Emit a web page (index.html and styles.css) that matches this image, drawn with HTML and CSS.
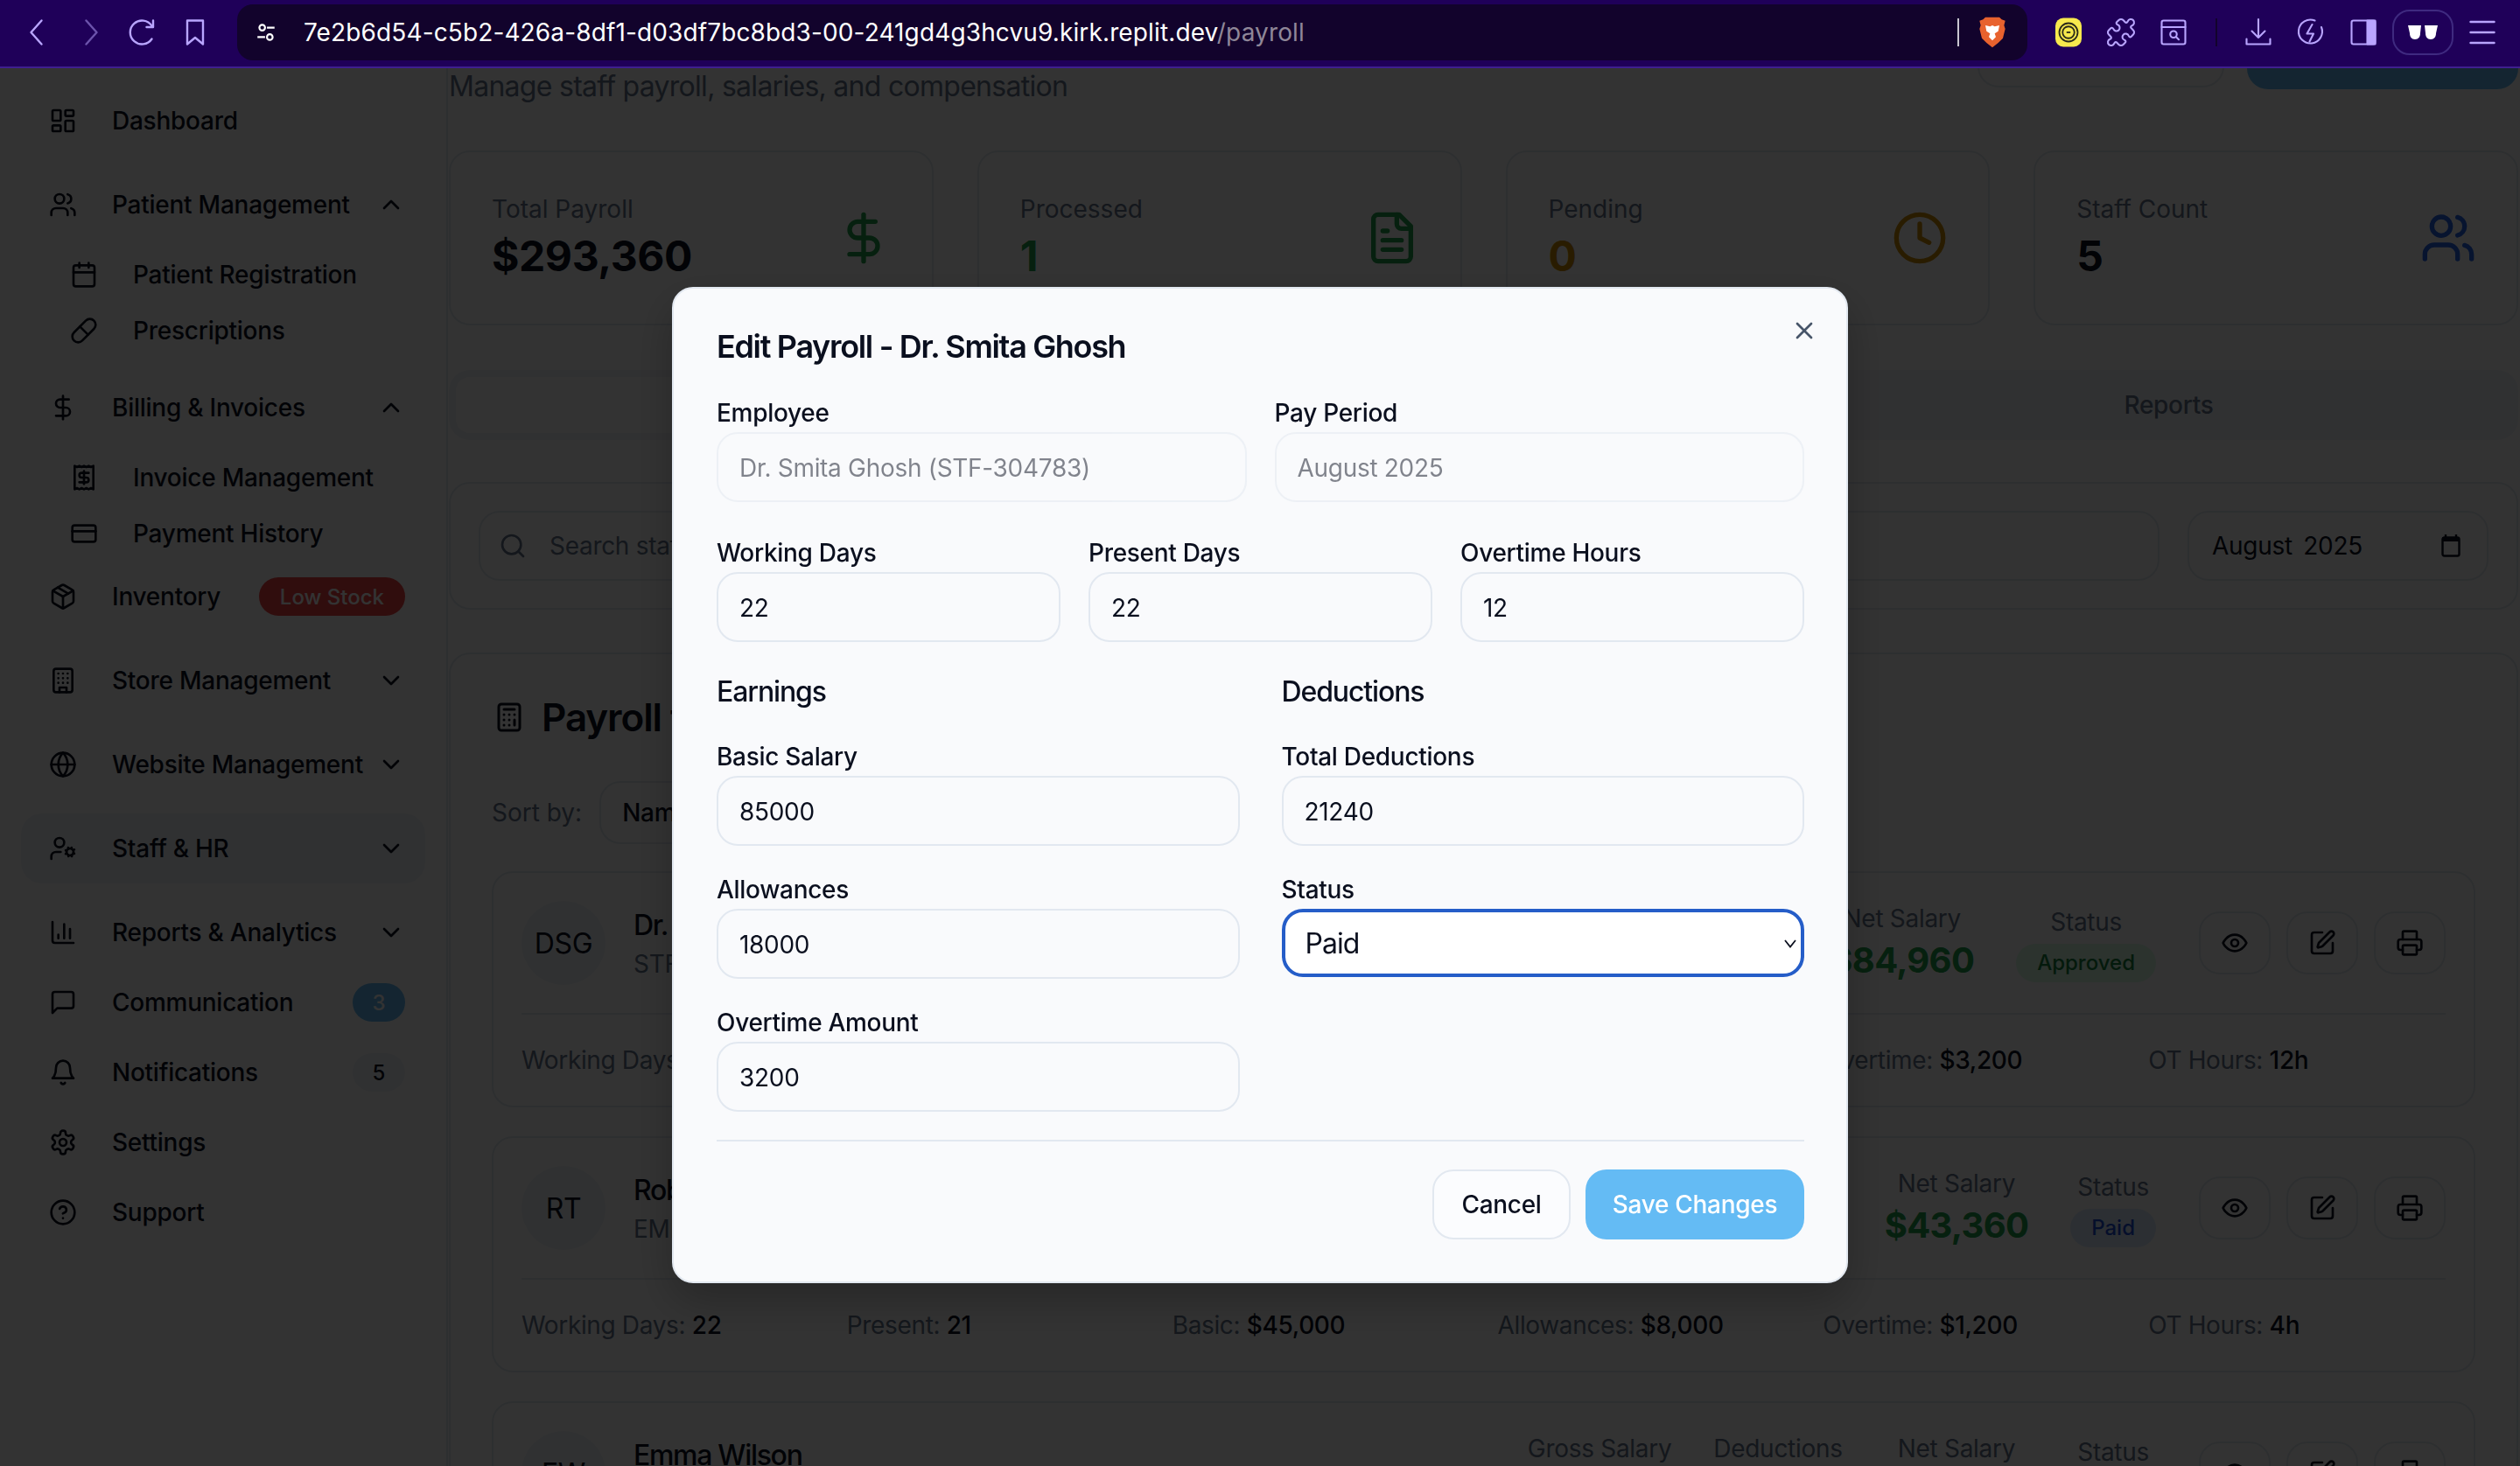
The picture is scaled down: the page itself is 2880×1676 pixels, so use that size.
FILE: index.html
```html
<!DOCTYPE html>
<html lang="en">
<head>
    <meta charset="UTF-8">
    <meta name="viewport" content="width=device-width, initial-scale=1.0">
    <title>Payroll</title>
    <link rel="stylesheet" href="styles.css">
</head>
<body>
    <svg class="sprite" xmlns="http://www.w3.org/2000/svg">
        <symbol id="i-dashboard" viewBox="0 0 24 24"><rect x="3" y="3" width="7" height="9" rx="1"/><rect x="14" y="3" width="7" height="5" rx="1"/><rect x="14" y="12" width="7" height="9" rx="1"/><rect x="3" y="16" width="7" height="5" rx="1"/></symbol>
        <symbol id="i-users" viewBox="0 0 24 24"><path d="M16 21v-2a4 4 0 0 0-4-4H6a4 4 0 0 0-4 4v2"/><circle cx="9" cy="7" r="4"/><path d="M22 21v-2a4 4 0 0 0-3-3.87"/><path d="M16 3.13a4 4 0 0 1 0 7.75"/></symbol>
        <symbol id="i-calendar" viewBox="0 0 24 24"><rect x="3" y="4" width="18" height="18" rx="2"/><path d="M16 2v4M8 2v4M3 10h18"/></symbol>
        <symbol id="i-pill" viewBox="0 0 24 24"><path d="m10.5 20.5 10-10a4.95 4.95 0 1 0-7-7l-10 10a4.95 4.95 0 1 0 7 7Z"/><path d="m8.5 8.5 7 7"/></symbol>
        <symbol id="i-dollar" viewBox="0 0 24 24"><path d="M12 2v20"/><path d="M17 5H9.5a3.5 3.5 0 0 0 0 7h5a3.5 3.5 0 0 1 0 7H6"/></symbol>
        <symbol id="i-up" viewBox="0 0 24 24"><path d="m18 15-6-6-6 6"/></symbol>
        <symbol id="i-down" viewBox="0 0 24 24"><path d="m6 9 6 6 6-6"/></symbol>
        <symbol id="i-receipt" viewBox="0 0 24 24"><path d="M4 2v20l2-1 2 1 2-1 2 1 2-1 2 1 2-1 2 1V2l-2 1-2-1-2 1-2-1-2 1-2-1-2 1Z"/><path d="M16 8h-6a2 2 0 1 0 0 4h4a2 2 0 1 1 0 4H8"/><path d="M12 17.5v-11"/></symbol>
        <symbol id="i-card" viewBox="0 0 24 24"><rect x="2" y="5" width="20" height="14" rx="2"/><path d="M2 10h20"/></symbol>
        <symbol id="i-package" viewBox="0 0 24 24"><path d="m7.5 4.27 9 5.15"/><path d="M21 8a2 2 0 0 0-1-1.73l-7-4a2 2 0 0 0-2 0l-7 4A2 2 0 0 0 3 8v8a2 2 0 0 0 1 1.73l7 4a2 2 0 0 0 2 0l7-4A2 2 0 0 0 21 16Z"/><path d="m3.3 7 8.7 5 8.7-5"/><path d="M12 22V12"/></symbol>
        <symbol id="i-building" viewBox="0 0 24 24"><rect x="4" y="2" width="16" height="20" rx="2"/><path d="M9 22v-4h6v4"/><path d="M8 6h.01M16 6h.01M12 6h.01M12 10h.01M12 14h.01M16 10h.01M16 14h.01M8 10h.01M8 14h.01"/></symbol>
        <symbol id="i-globe" viewBox="0 0 24 24"><circle cx="12" cy="12" r="10"/><path d="M12 2a14.5 14.5 0 0 0 0 20 14.5 14.5 0 0 0 0-20"/><path d="M2 12h20"/></symbol>
        <symbol id="i-usercog" viewBox="0 0 24 24"><circle cx="18" cy="15" r="3"/><circle cx="9" cy="7" r="4"/><path d="M10 15H6a4 4 0 0 0-4 4v2"/><path d="m21.7 16.4-.9-.3m-5.6-2.2-.9-.3m2.3 5.1.3-.9m2.2-5.6.3-.9m.2 7.4-.4-1m-2.4-5.4-.4-1m-2.1 5.3 1-.4m5.4-2.8 1-.4"/></symbol>
        <symbol id="i-chart" viewBox="0 0 24 24"><path d="M3 3v16a2 2 0 0 0 2 2h16"/><path d="M18 17V9M13 17V5M8 17v-3"/></symbol>
        <symbol id="i-message" viewBox="0 0 24 24"><path d="M21 15a2 2 0 0 1-2 2H7l-4 4V5a2 2 0 0 1 2-2h14a2 2 0 0 1 2 2z"/></symbol>
        <symbol id="i-bell" viewBox="0 0 24 24"><path d="M6 8a6 6 0 0 1 12 0c0 7 3 9 3 9H3s3-2 3-9"/><path d="M10.3 21a1.94 1.94 0 0 0 3.4 0"/></symbol>
        <symbol id="i-settings" viewBox="0 0 24 24"><path d="M12.22 2h-.44a2 2 0 0 0-2 2v.18a2 2 0 0 1-1 1.73l-.43.25a2 2 0 0 1-2 0l-.15-.08a2 2 0 0 0-2.73.73l-.22.38a2 2 0 0 0 .73 2.73l.15.1a2 2 0 0 1 1 1.72v.51a2 2 0 0 1-1 1.74l-.15.09a2 2 0 0 0-.73 2.73l.22.38a2 2 0 0 0 2.73.73l.15-.08a2 2 0 0 1 2 0l.43.25a2 2 0 0 1 1 1.73V20a2 2 0 0 0 2 2h.44a2 2 0 0 0 2-2v-.18a2 2 0 0 1 1-1.73l.43-.25a2 2 0 0 1 2 0l.15.08a2 2 0 0 0 2.73-.73l.22-.39a2 2 0 0 0-.73-2.73l-.15-.08a2 2 0 0 1-1-1.74v-.5a2 2 0 0 1 1-1.74l.15-.09a2 2 0 0 0 .73-2.73l-.22-.38a2 2 0 0 0-2.73-.73l-.15.08a2 2 0 0 1-2 0l-.43-.25a2 2 0 0 1-1-1.73V4a2 2 0 0 0-2-2z"/><circle cx="12" cy="12" r="3"/></symbol>
        <symbol id="i-help" viewBox="0 0 24 24"><circle cx="12" cy="12" r="10"/><path d="M9.09 9a3 3 0 0 1 5.83 1c0 2-3 3-3 3"/><path d="M12 17h.01"/></symbol>
        <symbol id="i-file" viewBox="0 0 24 24"><path d="M15 2H6a2 2 0 0 0-2 2v16a2 2 0 0 0 2 2h12a2 2 0 0 0 2-2V7Z"/><path d="M14 2v4a2 2 0 0 0 2 2h4"/><path d="M10 9H8M16 13H8M16 17H8"/></symbol>
        <symbol id="i-clock" viewBox="0 0 24 24"><circle cx="12" cy="12" r="10"/><path d="M12 6v6l4 2"/></symbol>
        <symbol id="i-search" viewBox="0 0 24 24"><circle cx="11" cy="11" r="8"/><path d="m21 21-4.3-4.3"/></symbol>
        <symbol id="i-calculator" viewBox="0 0 24 24"><rect x="4" y="2" width="16" height="20" rx="2"/><path d="M8 6h8M16 14v4M16 10h.01M12 10h.01M8 10h.01M12 14h.01M8 14h.01M12 18h.01M8 18h.01"/></symbol>
        <symbol id="i-eye" viewBox="0 0 24 24"><path d="M2 12s3-7 10-7 10 7 10 7-3 7-10 7-10-7-10-7Z"/><circle cx="12" cy="12" r="3"/></symbol>
        <symbol id="i-edit" viewBox="0 0 24 24"><path d="M12 3H5a2 2 0 0 0-2 2v14a2 2 0 0 0 2 2h14a2 2 0 0 0 2-2v-7"/><path d="M18.375 2.625a1 1 0 0 1 3 3l-9.013 9.014a2 2 0 0 1-.853.505l-2.873.84a.5.5 0 0 1-.62-.62l.84-2.873a2 2 0 0 1 .506-.852z"/></symbol>
        <symbol id="i-printer" viewBox="0 0 24 24"><path d="M6 18H4a2 2 0 0 1-2-2v-5a2 2 0 0 1 2-2h16a2 2 0 0 1 2 2v5a2 2 0 0 1-2 2h-2"/><path d="M6 9V3a1 1 0 0 1 1-1h10a1 1 0 0 1 1 1v6"/><rect x="6" y="14" width="12" height="8" rx="1"/></symbol>
        <symbol id="i-x" viewBox="0 0 24 24"><path d="M18 6 6 18"/><path d="m6 6 12 12"/></symbol>
        <symbol id="i-puzzle" viewBox="0 0 24 24"><path d="M19.439 7.85c-.049.322.059.648.289.878l1.568 1.568c.47.47.706 1.087.706 1.704s-.235 1.233-.706 1.704l-1.611 1.611a.98.98 0 0 1-.837.276c-.47-.07-.802-.48-.968-.925a2.501 2.501 0 1 0-3.214 3.214c.446.166.855.497.925.968a.979.979 0 0 1-.276.837l-1.61 1.61a2.404 2.404 0 0 1-1.705.707 2.402 2.402 0 0 1-1.704-.706l-1.568-1.568a1.026 1.026 0 0 0-.877-.29c-.493.074-.84.504-1.02.968a2.5 2.5 0 1 1-3.237-3.237c.464-.18.894-.527.967-1.02a1.026 1.026 0 0 0-.289-.877l-1.568-1.568A2.402 2.402 0 0 1 1.998 12c0-.617.236-1.234.706-1.704L4.23 8.77c.24-.24.581-.353.917-.303.515.077.877.528 1.073 1.01a2.5 2.5 0 1 0 3.259-3.259c-.482-.196-.933-.558-1.01-1.073-.05-.336.062-.676.303-.917l1.525-1.525A2.402 2.402 0 0 1 12 1.998c.617 0 1.234.236 1.704.706l1.568 1.568c.23.23.556.338.877.29.493-.074.84-.504 1.02-.968a2.5 2.5 0 1 1 3.237 3.237c-.464.18-.894.527-.967 1.02Z"/></symbol>
    </svg>

    <header class="toolbar">
        <div class="tool"><svg class="tool-icon" viewBox="0 0 24 24"><path d="M15 3 7 12l8 9"/></svg></div>
        <div class="tool tool-dim"><svg class="tool-icon" viewBox="0 0 24 24"><path d="m9 3 8 9-8 9"/></svg></div>
        <div class="tool"><svg class="tool-icon" viewBox="0 0 24 24"><path d="M19 17a9 9 0 1 1 0-10"/><path d="M20 3v5h-5"/></svg></div>
        <div class="tool"><svg class="tool-icon" viewBox="0 0 24 24"><path d="M6 3h12v18l-6-5-6 5z"/></svg></div>
        <div class="urlbar">
            <svg class="url-tune" viewBox="0 0 24 24"><circle cx="8" cy="7" r="3"/><path d="M13 7h8M3 17h8"/><circle cx="16" cy="17" r="3"/></svg>
            <span class="url-text">7e2b6d54-c5b2-426a-8df1-d03df7bc8bd3-00-241gd4g3hcvu9.kirk.replit.dev<span class="url-path">/payroll</span></span>
            <span class="url-sep"></span>
            <svg class="brave" viewBox="0 0 24 28"><path class="brave-body" d="M6 1h12l2 2 3 1-1 4 1 3-2 8-4 4-5 4-5-4-4-4-2-8 1-3-1-4 3-1z"/><path class="brave-face" d="M6 8l4 1 2-1 2 1 4-1-1 5-3 2 1 3-3 3-3-3 1-3-3-2z"/></svg>
        </div>
        <div class="tool tool-first"><svg class="ext-tile" viewBox="0 0 24 24"><rect x="2" y="1" width="20" height="22" rx="6"/><circle cx="12" cy="12" r="7"/><circle cx="12" cy="12" r="4.5"/><path d="M10.5 12h3"/></svg></div>
        <div class="tool"><svg class="tool-icon tool-thin"><use href="#i-puzzle"/></svg></div>
        <div class="tool"><svg class="tool-icon tool-thin" viewBox="0 0 24 24"><rect x="3" y="3" width="18" height="18" rx="1.5"/><path d="M3 8h18"/><circle cx="12" cy="13.5" r="2.5"/><path d="m14 15.5 2 2"/></svg></div>
        <span class="tool-sep"></span>
        <div class="tool"><svg class="tool-icon tool-thin" viewBox="0 0 24 24"><path d="M12 2v14M7 11l5 5 5-5M3 17v4h18v-4"/></svg></div>
        <div class="tool"><svg class="tool-icon tool-thin" viewBox="0 0 24 24"><path d="M20 8a9 9 0 1 1-5-5"/><path d="M13 6 9 13h5l-3 6"/></svg></div>
        <div class="tool"><svg class="tool-icon tool-thin" viewBox="0 0 24 24"><rect x="3" y="3" width="18" height="18" rx="1.5"/><rect class="tool-fill" x="15" y="3" width="6" height="18"/></svg></div>
        <div class="shield"><svg class="glasses" viewBox="0 0 36 18"><path d="M1 1h15l-1 9c0 4-2 7-6 7s-6-3-6-7zM20 1h15l-2 9c0 4-2 7-6 7s-6-3-6-7z"/></svg></div>
        <div class="tool"><svg class="tool-icon" viewBox="0 0 24 24"><path d="M3 4h18M3 12h18M3 20h18"/></svg></div>
    </header>

    <div class="app">
        <aside class="sidebar">
            <nav class="nav">
                <a class="nav-item"><svg class="icon"><use href="#i-dashboard"/></svg><span>Dashboard</span></a>

                <div class="nav-group">
                    <a class="nav-item"><svg class="icon"><use href="#i-users"/></svg><span>Patient Management</span><svg class="icon chevron"><use href="#i-up"/></svg></a>
                    <div class="sub-list">
                        <a class="nav-item sub-item"><svg class="icon"><use href="#i-calendar"/></svg><span>Patient Registration</span></a>
                        <a class="nav-item sub-item"><svg class="icon"><use href="#i-pill"/></svg><span>Prescriptions</span></a>
                    </div>
                </div>

                <div class="nav-group">
                    <a class="nav-item"><svg class="icon"><use href="#i-dollar"/></svg><span>Billing &amp; Invoices</span><svg class="icon chevron"><use href="#i-up"/></svg></a>
                    <div class="sub-list">
                        <a class="nav-item sub-item"><svg class="icon"><use href="#i-receipt"/></svg><span>Invoice Management</span></a>
                        <a class="nav-item sub-item"><svg class="icon"><use href="#i-card"/></svg><span>Payment History</span></a>
                    </div>
                </div>

                <a class="nav-item"><svg class="icon"><use href="#i-package"/></svg><span>Inventory</span><span class="badge badge-red">Low Stock</span></a>

                <div class="nav-group"><a class="nav-item"><svg class="icon"><use href="#i-building"/></svg><span>Store Management</span><svg class="icon chevron"><use href="#i-down"/></svg></a></div>
                <div class="nav-group"><a class="nav-item"><svg class="icon"><use href="#i-globe"/></svg><span>Website Management</span><svg class="icon chevron"><use href="#i-down"/></svg></a></div>
                <div class="nav-group nav-group-active"><a class="nav-item"><svg class="icon"><use href="#i-usercog"/></svg><span>Staff &amp; HR</span><svg class="icon chevron"><use href="#i-down"/></svg></a></div>
                <div class="nav-group"><a class="nav-item"><svg class="icon"><use href="#i-chart"/></svg><span>Reports &amp; Analytics</span><svg class="icon chevron"><use href="#i-down"/></svg></a></div>

                <a class="nav-item"><svg class="icon"><use href="#i-message"/></svg><span>Communication</span><span class="badge badge-round badge-blue">3</span></a>
                <a class="nav-item"><svg class="icon"><use href="#i-bell"/></svg><span>Notifications</span><span class="badge badge-round badge-grey">5</span></a>
                <a class="nav-item"><svg class="icon"><use href="#i-settings"/></svg><span>Settings</span></a>
                <a class="nav-item"><svg class="icon"><use href="#i-help"/></svg><span>Support</span></a>
            </nav>
        </aside>

        <main class="main">
            <div class="page-header">
                <p class="page-sub">Manage staff payroll, salaries, and compensation</p>
                <div class="page-actions">
                    <button class="head-btn head-outline" aria-label="Export"></button>
                    <button class="head-btn head-primary" aria-label="Process payroll"></button>
                </div>
            </div>

            <section class="stats">
                <div class="stat-card">
                    <div><p class="stat-label">Total Payroll</p><p class="stat-value">$293,360</p></div>
                    <svg class="icon stat-icon text-green"><use href="#i-dollar"/></svg>
                </div>
                <div class="stat-card">
                    <div><p class="stat-label">Processed</p><p class="stat-value text-green">1</p></div>
                    <svg class="icon stat-icon text-green"><use href="#i-file"/></svg>
                </div>
                <div class="stat-card">
                    <div><p class="stat-label">Pending</p><p class="stat-value text-amber">0</p></div>
                    <svg class="icon stat-icon text-amber"><use href="#i-clock"/></svg>
                </div>
                <div class="stat-card">
                    <div><p class="stat-label">Staff Count</p><p class="stat-value">5</p></div>
                    <svg class="icon stat-icon text-blue"><use href="#i-users"/></svg>
                </div>
            </section>

            <div class="tabs">
                <div class="tab tab-active">Payroll</div>
                <div class="tab">Salary</div>
                <div class="tab">Reports</div>
            </div>

            <section class="filters">
                <div class="search">
                    <svg class="icon search-icon"><use href="#i-search"/></svg>
                    <span>Search staff...</span>
                </div>
                <div class="month">
                    <span>August 2025</span>
                    <svg class="month-icon" viewBox="0 0 22 26"><path d="M5 0v3M17 0v3"/><rect x="1.5" y="3.5" width="19" height="21" rx="2"/><path class="month-band" d="M1 3h20v5H1z"/></svg>
                </div>
            </section>

            <section class="payroll">
                <h2 class="payroll-title"><svg class="icon title-icon"><use href="#i-calculator"/></svg>Payroll for August 2025</h2>
                <div class="sort-row">
                    <span class="sort-label">Sort by:</span>
                    <div class="sort-select">Name</div>
                </div>

                <div class="staff-list">
                    <article class="staff-card">
                        <div class="staff-top">
                            <div class="avatar">DSG</div>
                            <div class="staff-name"><h3>Dr. Smita Ghosh</h3><p>STF-304783</p></div>
                            <div class="staff-figures">
                                <div class="figure"><p>Gross Salary</p><b>$106,200</b></div>
                                <div class="figure"><p>Deductions</p><b>$21,240</b></div>
                                <div class="figure figure-net"><p>Net Salary</p><b class="text-green">$84,960</b></div>
                                <div class="status"><p>Status</p><span class="pill pill-green">Approved</span></div>
                                <div class="actions">
                                    <button class="act"><svg class="icon"><use href="#i-eye"/></svg></button>
                                    <button class="act"><svg class="icon"><use href="#i-edit"/></svg></button>
                                    <button class="act"><svg class="icon"><use href="#i-printer"/></svg></button>
                                </div>
                            </div>
                        </div>
                        <div class="staff-bottom">
                            <p>Working Days: <b>22</b></p><p>Present: <b>22</b></p><p>Basic: <b>$85,000</b></p><p>Allowances: <b>$18,000</b></p><p>Overtime: <b>$3,200</b></p><p>OT Hours: <b>12h</b></p>
                        </div>
                    </article>

                    <article class="staff-card">
                        <div class="staff-top">
                            <div class="avatar">RT</div>
                            <div class="staff-name"><h3>Robert Taylor</h3><p>EMP-304784</p></div>
                            <div class="staff-figures">
                                <div class="figure"><p>Gross Salary</p><b>$54,200</b></div>
                                <div class="figure"><p>Deductions</p><b>$10,840</b></div>
                                <div class="figure figure-net"><p>Net Salary</p><b class="text-green">$43,360</b></div>
                                <div class="status"><p>Status</p><span class="pill pill-blue">Paid</span></div>
                                <div class="actions">
                                    <button class="act"><svg class="icon"><use href="#i-eye"/></svg></button>
                                    <button class="act"><svg class="icon"><use href="#i-edit"/></svg></button>
                                    <button class="act"><svg class="icon"><use href="#i-printer"/></svg></button>
                                </div>
                            </div>
                        </div>
                        <div class="staff-bottom">
                            <p>Working Days: <b>22</b></p><p>Present: <b>21</b></p><p>Basic: <b>$45,000</b></p><p>Allowances: <b>$8,000</b></p><p>Overtime: <b>$1,200</b></p><p>OT Hours: <b>4h</b></p>
                        </div>
                    </article>

                    <article class="staff-card">
                        <div class="staff-top">
                            <div class="avatar">EW</div>
                            <div class="staff-name"><h3>Emma Wilson</h3><p>EMP-304785</p></div>
                            <div class="staff-figures">
                                <div class="figure"><p>Gross Salary</p><b>$54,200</b></div>
                                <div class="figure"><p>Deductions</p><b>$10,840</b></div>
                                <div class="figure figure-net"><p>Net Salary</p><b class="text-green">$43,360</b></div>
                                <div class="status"><p>Status</p><span class="pill pill-blue">Paid</span></div>
                                <div class="actions">
                                    <button class="act"><svg class="icon"><use href="#i-eye"/></svg></button>
                                    <button class="act"><svg class="icon"><use href="#i-edit"/></svg></button>
                                    <button class="act"><svg class="icon"><use href="#i-printer"/></svg></button>
                                </div>
                            </div>
                        </div>
                    </article>
                </div>
            </section>
        </main>
    </div>

    <div class="overlay">
        <div class="modal">
            <button class="modal-close" aria-label="Close"><svg class="icon"><use href="#i-x"/></svg></button>
            <h2 class="modal-title">Edit Payroll - Dr. Smita Ghosh</h2>

            <form class="form">
                <div class="row row-2">
                    <div class="field"><label>Employee</label><input class="input" value="Dr. Smita Ghosh (STF-304783)" disabled></div>
                    <div class="field"><label>Pay Period</label><input class="input" value="August 2025" disabled></div>
                </div>
                <div class="row row-3">
                    <div class="field"><label>Working Days</label><input class="input" value="22"></div>
                    <div class="field"><label>Present Days</label><input class="input" value="22"></div>
                    <div class="field"><label>Overtime Hours</label><input class="input" value="12"></div>
                </div>
                <div class="money">
                    <div class="money-col">
                        <h3>Earnings</h3>
                        <div class="field"><label>Basic Salary</label><input class="input" value="85000"></div>
                        <div class="field"><label>Allowances</label><input class="input" value="18000"></div>
                        <div class="field"><label>Overtime Amount</label><input class="input" value="3200"></div>
                    </div>
                    <div class="money-col">
                        <h3>Deductions</h3>
                        <div class="field"><label>Total Deductions</label><input class="input" value="21240"></div>
                        <div class="field">
                            <label>Status</label>
                            <div class="select-wrap">
                                <select class="select"><option>Paid</option></select>
                                <svg class="select-arrow" viewBox="0 0 12 12"><path d="m2 4 4 5 4-5"/></svg>
                            </div>
                        </div>
                    </div>
                </div>
                <div class="form-foot">
                    <button type="button" class="btn btn-outline">Cancel</button>
                    <button type="button" class="btn btn-primary">Save Changes</button>
                </div>
            </form>
        </div>
    </div>
</body>
</html>
```

FILE: styles.css
```css
*{
    margin: 0;
    padding: 0;
    box-sizing: border-box;
}

body{
    height: 100vh;
    overflow: hidden;
    display: flex;
    flex-direction: column;
    background: #fff;
    color: #0a0f1e;
    font-family: "Inter", "Liberation Sans", sans-serif;
    font-size: 28px;
    letter-spacing: -.3px;
}

.sprite{
    display: none;
}

.icon{
    width: 32px;
    height: 32px;
    flex: none;
    fill: none;
    stroke: currentColor;
    stroke-width: 2;
    stroke-linecap: round;
    stroke-linejoin: round;
}

/* browser bar */
.toolbar{
    height: 78px;
    flex: none;
    display: flex;
    align-items: center;
    padding-left: 13px;
    padding-bottom: 8px;
    padding-top: 6px;
    background: #1f0059;
    border-bottom: 2px solid #3f1f8f;
    position: relative;
    z-index: 2;
}
.tool{
    width: 60px;
    height: 60px;
    flex: none;
    display: flex;
    align-items: center;
    justify-content: center;
}
.tool-dim{
    opacity: .5;
}
.tool-first{
    margin-left: 17px;
}
.tool-icon{
    width: 36px;
    height: 36px;
    fill: none;
    stroke: #b9a5ff;
    stroke-width: 1.6;
    stroke-linecap: round;
    stroke-linejoin: round;
}
.tool-thin{
    stroke-width: 1.4;
}
.tool-fill{
    fill: #b9a5ff;
}
.tool-sep{
    width: 2px;
    height: 32px;
    margin: 0 17px 0 18px;
    background: #12032c;
}
.urlbar{
    width: 2046px;
    height: 64px;
    margin-left: 18px;
    flex: none;
    display: flex;
    align-items: center;
    padding-left: 20px;
    background: #12032c;
    border-radius: 18px;
}
.url-tune{
    width: 26px;
    height: 26px;
    fill: none;
    stroke: #fff;
    stroke-width: 2;
    flex: none;
    margin-right: 30px;
}
.url-text{
    flex: 1;
    color: #fff;
    font-size: 28px;
    letter-spacing: .13px;
    white-space: nowrap;
}
.url-path{
    color: #8f8798;
}
.url-sep{
    width: 2px;
    height: 32px;
    background: #c9c5d0;
}
.brave{
    width: 32px;
    height: 38px;
    margin: 0 24px 0 22px;
}
.brave-body{
    fill: #e8622e;
}
.brave-face{
    fill: #fff;
}
.ext-tile{
    width: 36px;
    height: 36px;
}
.ext-tile rect{
    fill: #f7e94d;
}
.ext-tile circle,
.ext-tile path{
    fill: none;
    stroke: #2a2a1a;
    stroke-width: 1.2;
}
.shield{
    width: 70px;
    height: 52px;
    flex: none;
    margin: 0 3px;
    display: flex;
    align-items: center;
    justify-content: center;
    border: 2px solid #3f2a80;
    border-radius: 20px;
}
.glasses{
    width: 36px;
    height: 18px;
    fill: #fff;
}

/* app shell */
.app{
    flex: 1;
    min-height: 0;
    display: flex;
}
.sidebar{
    width: 512px;
    flex: none;
    padding-top: 28px;
    border-right: 2px solid #e2e8f0;
}
.nav{
    display: flex;
    flex-direction: column;
    gap: 16px;
}
.nav-item{
    height: 64px;
    margin: 0 24px;
    padding: 0 23px 0 32px;
    display: flex;
    align-items: center;
    font-weight: 500;
    letter-spacing: -.25px;
    color: #0a0f1e;
    white-space: nowrap;
}
.nav-item > .icon:first-child{
    margin-right: 40px;
}
.nav-group{
    padding-top: 16px;
}
.nav-group-active .nav-item{
    height: 80px;
    margin-top: -8px;
    margin-bottom: -8px;
    background: #f1f5f9;
    border-radius: 24px;
}
.sub-list{
    margin: 16px 0 -8px;
}
.sub-item{
    padding-left: 56px;
}
.chevron{
    margin-left: auto;
}
.badge{
    margin-left: auto;
    height: 44px;
    display: flex;
    align-items: center;
    justify-content: center;
    padding: 0 24px;
    border-radius: 22px;
    font-size: 24px;
    font-weight: 500;
    letter-spacing: 0;
}
.badge-round{
    width: 60px;
    padding: 0;
}
.badge-red{
    background: #ef4444;
    color: #fff;
}
.badge-blue{
    background: #64bbf4;
    color: #fff;
}
.badge-grey{
    background: #f1f5f9;
    color: #0a0f1e;
}

/* main column, scrolled so the heading sits under the browser bar */
.main{
    flex: 1;
    min-width: 0;
    height: 100%;
    overflow: hidden;
    padding: 0 2px 0 1px;
}
.page-header{
    margin-top: -56px;
    display: flex;
    justify-content: space-between;
    align-items: flex-start;
}
.page-sub{
    padding-top: 53px;
    font-size: 32px;
    line-height: 48px;
    letter-spacing: -.72px;
    color: #64748b;
}
.page-actions{
    display: flex;
    align-items: flex-start;
    gap: 26px;
}
.head-btn{
    border-radius: 24px;
    background: none;
}
.head-outline{
    width: 282px;
    height: 78px;
    border: 2px solid #e2e8f0;
}
.head-primary{
    width: 310px;
    height: 80px;
    border: none;
    background: #64bbf4;
}

.stats{
    margin-top: 49px;
    display: grid;
    grid-template-columns: repeat(4, 1fr);
    gap: 50px;
}
.stat-card{
    height: 200px;
    padding: 46px 46px 46px 47px;
    display: flex;
    justify-content: space-between;
    align-items: center;
    border: 2px solid #e2e8f0;
    border-radius: 24px;
}
.stat-label{
    line-height: 40px;
    letter-spacing: 0;
    color: #64748b;
}
.stat-value{
    margin-top: 2px;
    font-size: 48px;
    line-height: 64px;
    font-weight: 700;
    letter-spacing: -.4px;
}
.stat-icon{
    width: 64px;
    height: 64px;
}
.text-green{
    color: #22a04a;
}
.text-amber{
    color: #ca8a04;
}
.text-blue{
    color: #2563eb;
}

.tabs{
    margin-top: 51px;
    height: 80px;
    padding: 8px;
    display: grid;
    grid-template-columns: repeat(3, 1fr);
    background: #f1f5f9;
    border-radius: 24px;
}
.tab{
    display: flex;
    align-items: center;
    justify-content: center;
    font-weight: 500;
    color: #64748b;
    border-radius: 16px;
}
.tab-active{
    background: #fff;
    color: #0a0f1e;
}

.filters{
    margin-top: 48px;
    height: 146px;
    padding: 0 32px;
    display: flex;
    align-items: center;
    gap: 32px;
    border: 2px solid #e2e8f0;
    border-radius: 24px;
}
.search{
    flex: 1;
    height: 80px;
    padding-left: 21px;
    display: flex;
    align-items: center;
    gap: 26px;
    color: #64748b;
    border: 2px solid #e2e8f0;
    border-radius: 24px;
}
.search-icon{
    color: #64748b;
}
.month{
    width: 344px;
    height: 80px;
    padding: 0 30px 0 26px;
    display: flex;
    align-items: center;
    justify-content: space-between;
    word-spacing: 5px;
    border: 2px solid #e2e8f0;
    border-radius: 24px;
}
.month-icon{
    width: 22px;
    height: 26px;
    fill: none;
    stroke: #0a0f1e;
    stroke-width: 2.4;
}
.month-band{
    fill: #0a0f1e;
    stroke: none;
}

.payroll{
    margin-top: 49px;
    padding: 46px 47px;
    border: 2px solid #e2e8f0;
    border-radius: 24px;
}
.payroll-title{
    display: flex;
    align-items: center;
    gap: 19px;
    font-size: 44px;
    line-height: 52px;
    font-weight: 600;
    letter-spacing: -.025em;
}
.title-icon{
    width: 36px;
    height: 36px;
    margin-left: 2px;
}
.sort-row{
    margin-top: 47px;
    display: flex;
    align-items: center;
    gap: 20px;
}
.sort-label{
    letter-spacing: 0;
    color: #64748b;
}
.sort-select{
    width: 300px;
    height: 72px;
    padding-left: 24px;
    display: flex;
    align-items: center;
    font-weight: 500;
    border: 2px solid #e2e8f0;
    border-radius: 24px;
}

.staff-list{
    margin-top: 31px;
    display: flex;
    flex-direction: column;
    gap: 33px;
}
.staff-card{
    padding: 32px;
    border: 2px solid #e2e8f0;
    border-radius: 24px;
}
.staff-top{
    display: flex;
    align-items: center;
    gap: 32px;
}
.avatar{
    width: 96px;
    height: 96px;
    flex: none;
    display: flex;
    align-items: center;
    justify-content: center;
    font-size: 32px;
    background: #f1f5f9;
    border-radius: 50%;
}
.staff-name h3{
    font-size: 32px;
    line-height: 48px;
    font-weight: 500;
    letter-spacing: -1.3px;
}
.staff-name p{
    line-height: 40px;
    color: #64748b;
}
.staff-figures{
    margin-left: auto;
    display: flex;
    align-items: center;
    gap: 48px;
}
.figure{
    text-align: center;
}
.figure p{
    line-height: 40px;
    color: #64748b;
}
.figure b{
    display: block;
    font-size: 32px;
    line-height: 56px;
    font-weight: 700;
}
.figure-net b{
    font-size: 40px;
    letter-spacing: -.7px;
}
.status{
    display: flex;
    flex-direction: column;
    align-items: center;
    gap: 5px;
    margin-right: 1px;
}
.status p{
    line-height: 40px;
    color: #64748b;
}
.pill{
    height: 44px;
    padding: 0 24px;
    display: flex;
    align-items: center;
    font-size: 24px;
    font-weight: 500;
    letter-spacing: 0;
    border-radius: 22px;
}
.pill-green{
    background: #dcfce7;
    color: #15803d;
}
.pill-blue{
    background: #dbeafe;
    color: #1d4ed8;
}
.actions{
    display: flex;
    gap: 18px;
}
.act{
    width: 82px;
    height: 72px;
    display: flex;
    align-items: center;
    justify-content: center;
    color: #0a0f1e;
    background: none;
    border: 2px solid #e2e8f0;
    border-radius: 24px;
}
.staff-bottom{
    margin-top: 32px;
    padding-top: 32px;
    display: grid;
    grid-template-columns: repeat(6, 1fr);
    gap: 32px;
    line-height: 40px;
    letter-spacing: -.35px;
    color: #64748b;
    border-top: 2px solid #e2e8f0;
}
.staff-bottom b{
    font-weight: 500;
    color: #0a0f1e;
}

/* dialog */
.overlay{
    position: fixed;
    top: 78px;
    left: 0;
    right: 0;
    bottom: 0;
    z-index: 1;
    display: flex;
    justify-content: center;
    align-items: flex-start;
    padding-top: 250px;
    background: rgba(0, 0, 0, .8);
}
.modal{
    position: relative;
    width: 1344px;
    padding: 48px 48px 48px 49px;
    background: #f9fafc;
    border: 2px solid #e2e8f0;
    border-radius: 24px;
    box-shadow: 0 20px 50px rgba(0, 0, 0, .25);
}
.modal-close{
    position: absolute;
    top: 32px;
    right: 32px;
    width: 32px;
    height: 32px;
    display: flex;
    color: #475569;
    background: none;
    border: none;
}
.modal-title{
    font-size: 36px;
    line-height: 36px;
    font-weight: 600;
    letter-spacing: -.037em;
}
.form{
    margin-top: 38px;
}
.row{
    display: grid;
    gap: 32px;
    margin-bottom: 38px;
}
.row-2{
    grid-template-columns: repeat(2, 1fr);
}
.row-3{
    grid-template-columns: repeat(3, 1fr);
    margin-bottom: 33px;
}
.field label{
    display: block;
    height: 40px;
    margin-bottom: 2px;
    line-height: 40px;
    font-weight: 500;
}
.input{
    width: 100%;
    height: 80px;
    padding: 2px 24px 0;
    font: inherit;
    letter-spacing: inherit;
    color: #0a0f1e;
    background: none;
    border: 2px solid #e2e8f0;
    border-radius: 24px;
}
.input:disabled{
    opacity: .5;
}
.money{
    display: grid;
    grid-template-columns: repeat(2, 1fr);
    gap: 48px;
}
.money-col{
    display: flex;
    flex-direction: column;
    gap: 30px;
}
.money-col h3{
    font-size: 32px;
    line-height: 48px;
    font-weight: 500;
    letter-spacing: -.035em;
}
.select-wrap{
    position: relative;
}
.select{
    width: 100%;
    height: 78px;
    padding: 0 23px;
    appearance: none;
    font: inherit;
    font-size: 32px;
    letter-spacing: -1px;
    color: #0a0f1e;
    background: #fff;
    border: 4px solid #255dc8;
    border-radius: 24px;
}
.select-arrow{
    position: absolute;
    top: 30px;
    right: 7px;
    width: 18px;
    height: 18px;
    fill: none;
    stroke: #0a0f1e;
    stroke-width: 1.2;
}
.form-foot{
    margin-top: 32px;
    padding-top: 32px;
    display: flex;
    justify-content: flex-end;
    gap: 17px;
    border-top: 2px solid #e2e8f0;
}
.btn{
    height: 80px;
    font: inherit;
    letter-spacing: inherit;
    font-weight: 500;
    border-radius: 24px;
}
.btn-outline{
    width: 158px;
    color: #0a0f1e;
    background: #fbfcfe;
    border: 2px solid #e2e8f0;
}
.btn-primary{
    width: 250px;
    color: #fff;
    background: #64bbf4;
    border: none;
}
```
